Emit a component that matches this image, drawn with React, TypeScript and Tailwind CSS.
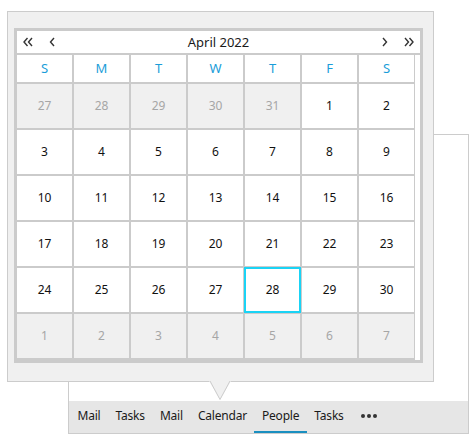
import React from "react";

const dayNames = ["S", "M", "T", "W", "T", "F", "S"];

type Cell = { n: number; out?: boolean; selected?: boolean };

const weeks: Cell[][] = [
  [{ n: 27, out: true }, { n: 28, out: true }, { n: 29, out: true }, { n: 30, out: true }, { n: 31, out: true }, { n: 1 }, { n: 2 }],
  [3, 4, 5, 6, 7, 8, 9].map((n) => ({ n })),
  [10, 11, 12, 13, 14, 15, 16].map((n) => ({ n })),
  [17, 18, 19, 20, 21, 22, 23].map((n) => ({ n })),
  [24, 25, 26, 27, 28, 29, 30].map((n) => ({ n, selected: n === 28 })),
  [1, 2, 3, 4, 5, 6, 7].map((n) => ({ n, out: true })),
];

const tabs = ["Mail", "Tasks", "Mail", "Calendar", "People", "Tasks"];

function Chevron({ double, dir }: { double?: boolean; dir: "left" | "right" }) {
  const flip = dir === "right" ? "scale(-1,1) translate(-12,0)" : undefined;
  return (
    <svg width="12" height="10" viewBox="0 0 12 10" className="block">
      <g transform={flip} fill="none" stroke="#333" strokeWidth="1.4">
        {double ? (
          <>
            <polyline points="4.5,1 1,5 4.5,9" />
            <polyline points="9,1 5.5,5 9,9" />
          </>
        ) : (
          <polyline points="7,1 3.5,5 7,9" />
        )}
      </g>
    </svg>
  );
}

export default function App() {
  return (
    <div
      className="relative w-[476px] h-[448px] bg-white overflow-hidden"
      style={{ fontFamily: '"Noto Sans", "Open Sans", sans-serif' }}
    >
      {/* app window behind the popup */}
      <div className="ml-[68px] mt-[134px] w-[401px] h-[300px] border border-[#cccccc] bg-white flex flex-col justify-end">
        <div className="h-[32px] bg-[#e6e6e6] flex items-stretch pl-[1px] text-[12px] tracking-[-0.2px] text-[#1a1a1a]">
          {tabs.map((t, i) => (
            <div
              key={i}
              className={`px-[7.5px] flex items-center border-b-2 ${t === "People" && i === 4 ? "border-[#1a8fc0]" : "border-transparent"}`}
            >
              {t}
            </div>
          ))}
          <div className="px-[10px] flex items-center gap-[2px] pb-[2px]">
            <span className="w-[4px] h-[4px] rounded-full bg-[#333]" />
            <span className="w-[4px] h-[4px] rounded-full bg-[#333]" />
            <span className="w-[4px] h-[4px] rounded-full bg-[#333]" />
          </div>
        </div>
      </div>

      {/* calendar flyout */}
      <div className="absolute left-[7px] top-[11px] w-[427px] h-[371px] border border-[#cccccc] bg-[#f0f0f0] pl-[6px] pt-[16px]">
        <div className="w-[409px] border-[3px] border-[#cbcbcb] bg-white">
          <div className="h-[22px] flex items-center px-[6px] text-[13px] text-[#1a1a1a]">
            <div className="flex items-center gap-[12px]">
              <Chevron double dir="left" />
              <Chevron dir="left" />
            </div>
            <div className="flex-1 text-center leading-none">April 2022</div>
            <div className="flex items-center gap-[12px]">
              <Chevron dir="right" />
              <Chevron double dir="right" />
            </div>
          </div>
          <div className="h-[2px] bg-[#cbcbcb]" />
          <div className="flex">
            <div className="grid grid-cols-[repeat(7,55px)] auto-rows-[44px] grid-rows-[27px] gap-[2px] bg-[#cbcbcb] pr-[1px] pb-[2px]">
              {dayNames.map((d, i) => (
                <div key={i} className="bg-white flex items-center justify-center text-[13px] text-[#1a9dd9]">
                  {d}
                </div>
              ))}
              {weeks.flat().map((c, i) => (
                <div
                  key={i}
                  className={`relative flex items-center justify-center text-[12px] ${c.out ? "bg-[#f0f0f0] text-[#a6a6a6]" : "bg-white text-[#111]"}`}
                >
                  {c.selected && (
                    <div className="absolute -inset-[1px] border-2 border-[#1ad3f5]" />
                  )}
                  <span className="relative">{c.n}</span>
                </div>
              ))}
            </div>
            <div className="flex-1 bg-white" />
          </div>
        </div>
      </div>

      {/* callout arrow */}
      <svg className="absolute left-[209px] top-[381px]" width="22" height="20" viewBox="0 0 22 20">
        <polygon points="0,0 11,19 22,0" fill="#f0f0f0" />
        <polyline points="1,0 11,18.5 21,0" fill="none" stroke="#cccccc" strokeWidth="1" />
      </svg>
    </div>
  );
}
